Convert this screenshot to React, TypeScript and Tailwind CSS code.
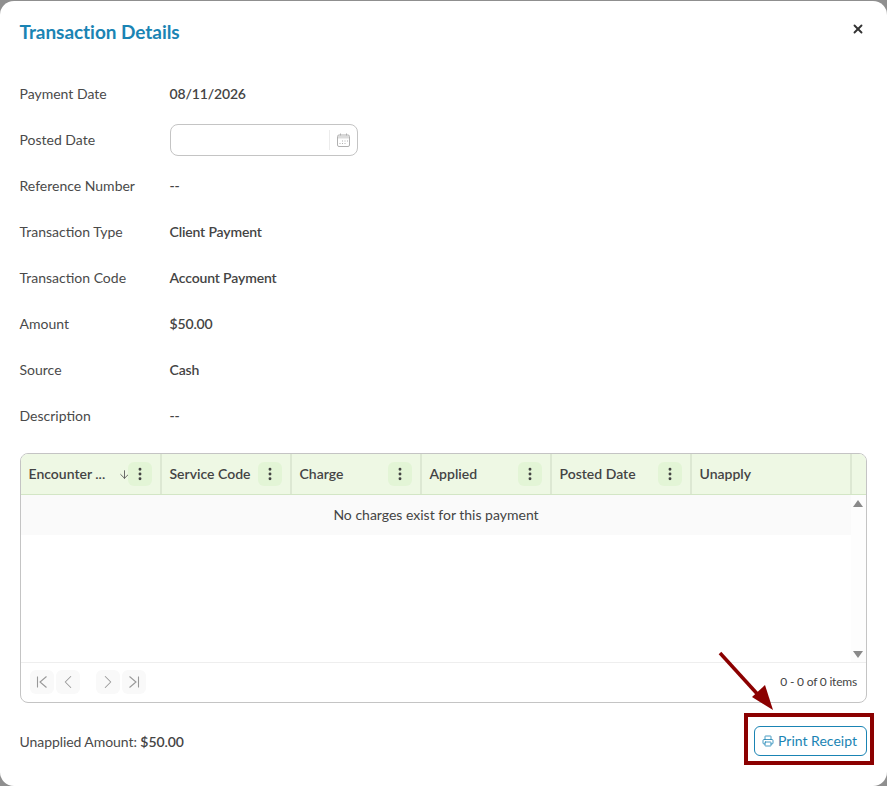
import React from "react";
import { ArrowDown, ChevronLeft, ChevronRight, EllipsisVertical, Printer, X } from "lucide-react";

const rowsBefore = [{ label: "Payment Date", value: "08/11/2026" }];
const rowsAfter = [
  { label: "Reference Number", value: "--" },
  { label: "Transaction Type", value: "Client Payment" },
  { label: "Transaction Code", value: "Account Payment" },
  { label: "Amount", value: "$50.00" },
  { label: "Source", value: "Cash" },
  { label: "Description", value: "--" },
];

function DetailRow({ label, children }: { label: string; children: React.ReactNode }) {
  return (
    <div className="flex h-[46px] items-center">
      <div className="w-[150px] shrink-0 text-[#4a4a4a]">
        <span className="-ml-[0.5px] block">{label}</span>
      </div>
      {children}
    </div>
  );
}

function HeaderCell({ title, width, sorted, menu = true }: { title: string; width: string; sorted?: boolean; menu?: boolean }) {
  return (
    <div className={`flex h-full shrink-0 items-center border-r-2 border-[#dde8d3] pr-2 pl-[7.5px] font-semibold text-[#444] ${width}`}>
      <span className="flex-1 whitespace-nowrap">{title}</span>
      {sorted && <ArrowDown size={13} strokeWidth={1.6} className="-mr-[3px] text-[#555]" />}
      {menu && (
        <span className="flex h-6 w-6 items-center justify-center rounded-md bg-[#e3f5d6]">
          <EllipsisVertical size={16} strokeWidth={2.4} className="text-[#444]" />
        </span>
      )}
    </div>
  );
}

function PagerButton({ children }: { children: React.ReactNode }) {
  return <span className="flex h-6 w-6 items-center justify-center rounded-md bg-[#f9f9f9] text-[#999]">{children}</span>;
}

export default function App() {
  return (
    <div className="relative h-[786px] w-[887px] overflow-hidden bg-[#8f8f8f] pt-px font-['Lato',sans-serif] text-sm">
      <div className="flex h-full flex-col rounded-[14px] bg-white px-5">
        {/* Title */}
        <div className="flex h-[70px] shrink-0 items-start justify-between pt-[17px]">
          <h1 className="-ml-[0.5px] text-[19px] leading-7 font-bold tracking-[-0.05px] text-[#1a84b4]">Transaction Details</h1>
          <button className="mt-1 mr-[2px] text-[#333]">
            <X size={14} strokeWidth={3.2} />
          </button>
        </div>

        {/* Detail rows */}
        <div className="shrink-0">
          {rowsBefore.map((r) => (
            <DetailRow key={r.label} label={r.label}>
              <span className="-ml-[0.5px] font-semibold tracking-[-0.15px] text-[#444]">{r.value}</span>
            </DetailRow>
          ))}
          <DetailRow label="Posted Date">
            <div className="flex h-8 w-[188px] items-center justify-end rounded-lg border border-[#c4c4c4] pr-[7px]">
              <span className="flex h-5 items-center border-l border-[#ececec] pl-[7px]">
                <svg width="13" height="14" viewBox="0 0 13 14" fill="none" stroke="#b0b0b0" strokeWidth="1">
                  <path d="M3.5.5v2M9.5.5v2" />
                  <rect x=".5" y="2" width="12" height="11.5" rx="1.5" />
                  <path d="M1 3h11v2.5H1z" fill="#dcdcdc" stroke="none" />
                  <path d="M5 8h1M7.5 8h1M10 8h1M5 10.5h1M7.5 10.5h1M2.5 10.5h1" />
                </svg>
              </span>
            </div>
          </DetailRow>
          {rowsAfter.map((r) => (
            <DetailRow key={r.label} label={r.label}>
              <span className="-ml-[0.5px] font-semibold tracking-[-0.15px] text-[#444]">{r.value}</span>
            </DetailRow>
          ))}
        </div>

        {/* Charges grid */}
        <div className="mt-[14px] flex h-[250px] w-[847px] shrink-0 flex-col overflow-hidden rounded-lg border border-[#c4c4c4]">
          <div className="flex h-[41px] shrink-0 items-center border-b border-[#d3e6c5] bg-[#eef8e4]">
            <HeaderCell title="Encounter ..." width="w-[141px]" sorted />
            <HeaderCell title="Service Code" width="w-[130px]" />
            <HeaderCell title="Charge" width="w-[130px]" />
            <HeaderCell title="Applied" width="w-[130px]" />
            <HeaderCell title="Posted Date" width="w-[140px]" />
            <HeaderCell title="Unapply" width="w-[160px]" menu={false} />
          </div>
          <div className="flex min-h-0 flex-1">
            <div className="w-[830px] shrink-0">
              <div className="flex h-10 items-center justify-center bg-[#fafafa] text-[#444]">No charges exist for this payment</div>
            </div>
            <div className="flex flex-1 flex-col items-center justify-between bg-[#fdfdfd] pt-[5px] pr-px pb-[4px]">
              <span className="h-0 w-0 border-x-[5px] border-b-[7px] border-x-transparent border-b-[#8a8a8a]" />
              <span className="h-0 w-0 border-x-[5px] border-t-[7px] border-x-transparent border-t-[#8a8a8a]" />
            </div>
          </div>
          <div className="flex h-[40px] shrink-0 items-center justify-between border-t border-[#eeeeee] pr-[9px] pb-px pl-[9px]">
            <div className="flex items-center gap-[2px]">
              <PagerButton>
                <svg width="14" height="14" viewBox="0 0 14 14" fill="none" stroke="currentColor" strokeWidth="1.1">
                  <path d="M2.5 1.5v11M11.5 1.5 5 7l6.5 5.5" />
                </svg>
              </PagerButton>
              <PagerButton>
                <ChevronLeft size={22} strokeWidth={1.1} />
              </PagerButton>
              <span className="w-3" />
              <PagerButton>
                <ChevronRight size={22} strokeWidth={1.1} />
              </PagerButton>
              <PagerButton>
                <svg width="14" height="14" viewBox="0 0 14 14" fill="none" stroke="currentColor" strokeWidth="1.1">
                  <path d="M11.5 1.5v11M2.5 1.5 9 7l-6.5 5.5" />
                </svg>
              </PagerButton>
            </div>
            <span className="text-xs tracking-[-0.2px] text-[#444]">0 - 0 of 0 items</span>
          </div>
        </div>

        {/* Footer */}
        <div className="mt-[22px] flex h-[31px] w-[847px] shrink-0 items-center justify-between">
          <span className="-ml-[0.5px] pt-[2px] tracking-[-0.07px] text-[#4a4a4a]">
            Unapplied Amount: <span className="font-semibold text-[#444]">$50.00</span>
          </span>
          <button className="flex h-[30px] w-[113px] items-center justify-center gap-1 rounded-md border border-[#1a84b4] pr-[2px] text-[#1a84b4]">
            <Printer size={12} strokeWidth={1.6} />
            Print Receipt
          </button>
        </div>
      </div>

      {/* Annotation overlay */}
      <div className="absolute top-[713px] left-[744px] h-[52px] w-[130px] border-4 border-[#8b0000]" />
      <svg className="absolute top-0 left-0" width="887" height="786" fill="none">
        <path d="M720 653 761 698" stroke="#8b0000" strokeWidth="3.5" />
        <path d="M773 710 752 697 765 685Z" fill="#8b0000" />
      </svg>
    </div>
  );
}
